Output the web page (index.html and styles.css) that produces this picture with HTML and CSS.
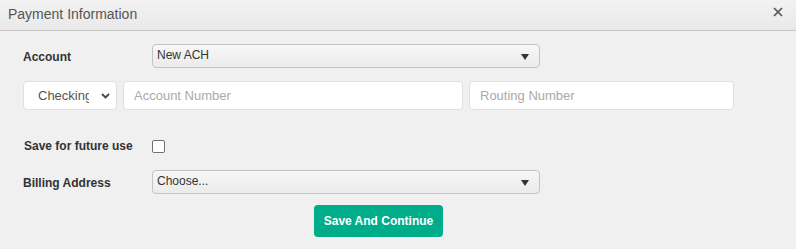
FILE: index.html
```html
<!DOCTYPE html>
<html>
<head>
<meta charset="utf-8">
<link rel="stylesheet" href="styles.css">
</head>
<body>
<div class="dialog">
  <div class="header">
    <span class="title">Payment Information</span>
    <svg class="close" width="10" height="10" viewBox="0 0 10 10"><path d="M1 1L9 9M9 1L1 9" stroke="#555" stroke-width="1.7" fill="none"/></svg>
  </div>
  <div class="content">
    <div class="row row-account">
      <label class="label">Account</label>
      <div class="pick">
        <span class="pick-text">New ACH</span>
        <svg class="tri" width="8" height="6" viewBox="0 0 8 6"><path d="M0 0H8L4 6Z" fill="#333"/></svg>
      </div>
    </div>
    <div class="row row-bank">
      <div class="type">
        <span class="type-text">Checking</span>
        <svg class="chev" width="9" height="6" viewBox="0 0 9 6"><path d="M1 1L4.5 4.5L8 1" fill="none" stroke="#444" stroke-width="1.8"/></svg>
      </div>
      <input class="field field-acct" type="text" placeholder="Account Number">
      <input class="field field-route" type="text" placeholder="Routing Number">
    </div>
    <div class="row row-save">
      <label class="label">Save for future use</label>
      <input class="check" type="checkbox">
    </div>
    <div class="row row-billing">
      <label class="label">Billing Address</label>
      <div class="pick">
        <span class="pick-text">Choose...</span>
        <svg class="tri" width="8" height="6" viewBox="0 0 8 6"><path d="M0 0H8L4 6Z" fill="#333"/></svg>
      </div>
    </div>
    <div class="row row-action">
      <button class="btn">Save And Continue</button>
    </div>
  </div>
</div>
</body>
</html>
```
FILE: styles.css
```css
* { box-sizing: border-box; }
html, body { margin: 0; padding: 0; }
body {
  background: #f0f0f0;
  font-family: "Liberation Sans", Arial, sans-serif;
  width: 796px;
  height: 249px;
  overflow: hidden;
}
.header {
  height: 31px;
  border-bottom: 1px solid #c8c8c8;
  background: linear-gradient(#f2f2f2, #e9e9e9);
  display: flex;
  align-items: center;
  justify-content: space-between;
  padding: 0 13px 0 8px;
}
.title {
  font-size: 14px;
  color: #555;
  margin-top: -2px;
}
.close {
  display: block;
  margin-top: -6px;
}
.content {
  padding: 0 23px;
}
.row {
  display: flex;
  align-items: center;
}
.label {
  width: 129px;
  font-size: 12px;
  font-weight: bold;
  color: #333;
  flex: none;
}
.row-account { margin-top: 13px; height: 24px; }
.row-account .label { padding-top: 2px; }
.pick {
  width: 388px;
  height: 24px;
  border: 1px solid #c4c4c4;
  border-radius: 4px;
  background: linear-gradient(#f7f7f7, #ebebeb);
  display: flex;
  align-items: center;
  justify-content: space-between;
  padding: 0 10px 0 4px;
}
.pick-text {
  font-size: 12px;
  color: #333;
  margin-top: -3px;
}
.tri { display: block; margin-top: 1px; }
.row-bank { margin-top: 13px; height: 29px; gap: 6px; }
.type {
  width: 94px;
  height: 29px;
  background: #fff;
  border: 1px solid #e0e0e0;
  border-radius: 4px;
  display: flex;
  align-items: center;
  padding: 0 6px 0 14px;
}
.type-text {
  font-size: 13px;
  color: #555;
  width: 51px;
  overflow: hidden;
  white-space: nowrap;
  flex: none;
}
.chev { display: block; margin-left: auto; margin-right: 0; }
.field {
  height: 29px;
  background: #fff;
  border: 1px solid #e0e0e0;
  border-radius: 4px;
  padding: 0 10px;
  font-family: "Liberation Sans", Arial, sans-serif;
  font-size: 13px;
  color: #555;
  outline: none;
}
.field::placeholder { color: #aaa; }
.field-acct { width: 340px; }
.field-route { width: 265px; }
.row-save { margin-top: 27px; height: 18px; }
.row-save .label { margin-left: 1px; width: 128px; }
.check {
  appearance: none;
  -webkit-appearance: none;
  margin: 0;
  width: 13px;
  height: 13px;
  border: 1px solid #707070;
  border-radius: 2px;
  background: #fff;
}
.row-billing { margin-top: 15px; height: 24px; }
.row-billing .label { padding-top: 2px; }
.row-action { margin-top: 11px; padding-left: 291px; }
.btn {
  width: 129px;
  height: 32px;
  background: #00ad8a;
  border: none;
  border-radius: 4px;
  color: #fff;
  font-family: "Liberation Sans", Arial, sans-serif;
  font-size: 12px;
  font-weight: bold;
  padding: 0;
}
```
